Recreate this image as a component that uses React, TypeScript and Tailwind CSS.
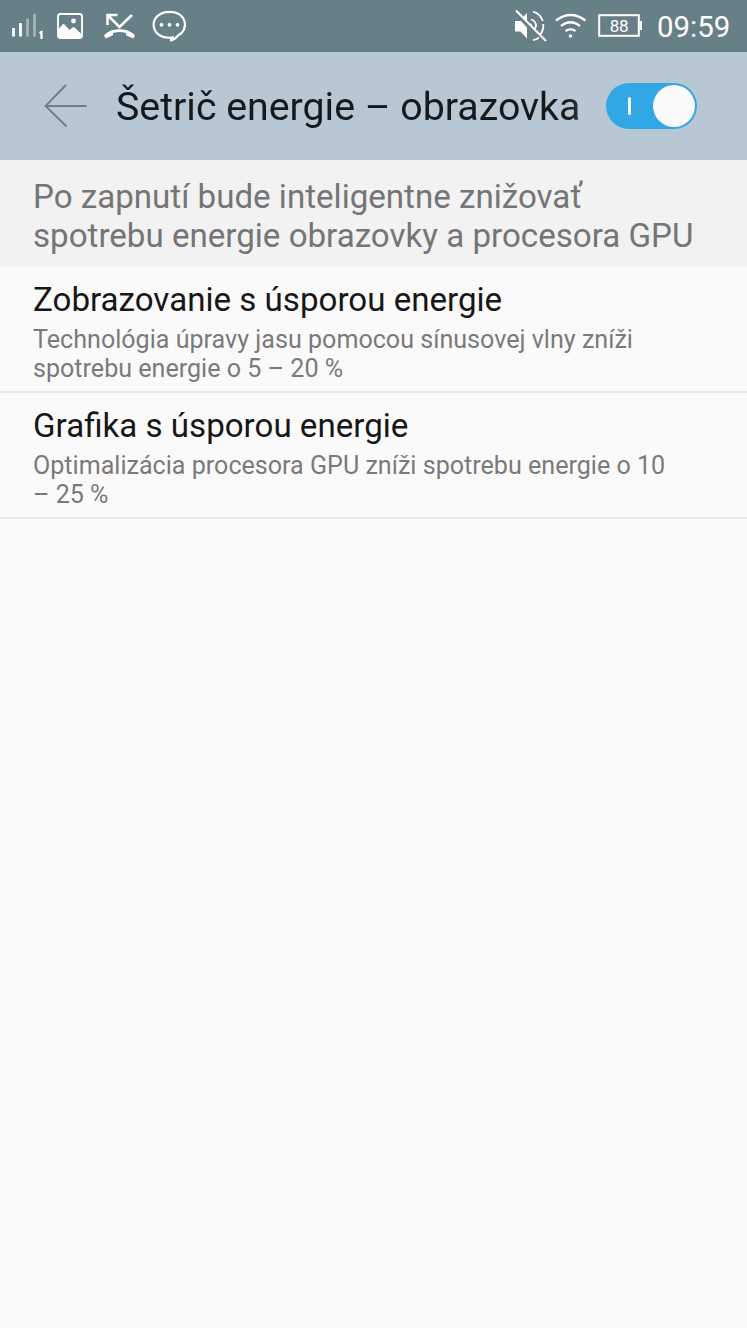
import { useState } from 'react';

interface PowerOption {
  title: string;
  summary: string[];
}

const OPTIONS: PowerOption[] = [
  {
    title: 'Zobrazovanie s úsporou energie',
    summary: ['Technológia úpravy jasu pomocou sínusovej vlny zníži', 'spotrebu energie o 5 – 20 %'],
  },
  {
    title: 'Grafika s úsporou energie',
    summary: ['Optimalizácia procesora GPU zníži spotrebu energie o 10', '– 25 %'],
  },
];

function StatusBar() {
  return (
    <div className="flex h-[52px] items-center justify-between bg-[#678087] text-white">
      {/* Notifications */}
      <svg width="200" height="52" viewBox="0 0 200 52" fill="none" stroke="#fff">
        {/* Signal */}
        <g strokeWidth="2.8">
          <path d="M13.5 28v8.5M20.5 23v13.5" />
          <path d="M27.5 18.5v18M34.5 14v22.5" opacity=".4" />
        </g>
        <path d="M39.5 33l2-1v7" strokeWidth="2.2" />
        {/* Picture */}
        <rect x="58" y="14" width="24" height="24" rx="2.5" strokeWidth="1.8" />
        <path d="M58 30l4.5-5.5q1-.8 2 0l5 5.5 3-2.5q1.2-.6 2 0l7.5 7V38H58z" fill="#fff" stroke="none" />
        <circle cx="73.5" cy="21" r="2.4" fill="#fff" stroke="none" />
        {/* Missed call */}
        <path d="M107.5 25v-10h10M108 15.5l11.5 11.5L132 15" strokeWidth="2.5" />
        <path d="M104 35.500C111 27.300 128 27.300 135 35.500L133.300 38.500 126 35.300V33Q119.500 31 113 33V35.300L105.700 38.500Z" fill="#fff" stroke="none" />
        {/* Message */}
        <path d="M174 37.200C149 42 146.500 12 169.500 11.800C187 11.800 189.500 30 178 35.500Q176 39 171 40.500L171.500 37.800" strokeWidth="2.2" strokeLinejoin="round" />
        <g fill="#fff" stroke="none">
          <circle cx="161.5" cy="24.8" r="1.9" />
          <circle cx="169.5" cy="24.8" r="1.9" />
          <circle cx="177.5" cy="24.8" r="1.9" />
        </g>
      </svg>

      <div className="flex items-center">
        <svg width="136" height="52" viewBox="510 0 136 52" fill="none" stroke="#fff">
          {/* Muted speaker */}
          <path d="M515 21h6l6 6.500V38.500l-6.500-7H515zM522.500 17.500l4.500-4.500v9z" fill="#fff" stroke="none" />
          <path d="M516 10.500L546 41" strokeWidth="2" />
          <path d="M533 11.500Q540.500 14 542.800 21M543.300 24Q543.800 30 540.300 34.500M533 40.200q3.500-.7 6-2.500M531 19.500q5 1.500 5 6.500l-1 2.500M530 24l1.500 1.500" strokeWidth="1.8" />
          {/* Wifi */}
          <path d="M556 20.500Q570.500 9.500 585.500 20.500M561 26Q570.500 18.500 580 26M565.500 31Q570.500 27.500 575.500 31" strokeWidth="2.2" />
          <circle cx="570.5" cy="36" r="1.7" fill="#fff" stroke="none" />
          {/* Battery */}
          <rect x="599.2" y="15.2" width="39.6" height="20.6" strokeWidth="2" />
          <path d="M639.500 21h2.500v9h-2.500z" fill="#fff" stroke="none" />
          <text x="619" y="32" fontSize="17" letterSpacing="-0.3" textAnchor="middle" fill="#fff" stroke="none">88</text>
        </svg>
        <span className="w-[101px] pt-[3px] pl-[11px] text-[29.4px] leading-none whitespace-nowrap">09:59</span>
      </div>
    </div>
  );
}

function Switch({ checked, onChange }: { checked: boolean; onChange: (value: boolean) => void }) {
  return (
    <button
      type="button"
      role="switch"
      aria-checked={checked}
      onClick={() => onChange(!checked)}
      className={`flex h-[46px] w-[91px] shrink-0 items-center rounded-full px-[2px] ${
        checked ? 'justify-between bg-[#31a7e5]' : 'justify-start bg-[#9aa7b0]'
      }`}
    >
      {checked && <span className="ml-[20px] h-[18px] w-[3px] rounded-full bg-[#f4fbff]" />}
      <span className="size-[42px] rounded-full bg-[#fafafa]" />
    </button>
  );
}

export default function App() {
  const [enabled, setEnabled] = useState(true);

  return (
    <div className="flex min-h-screen w-full flex-col overflow-hidden bg-[#fafafa] font-['Roboto','Liberation_Sans',sans-serif]">
      <StatusBar />

      {/* Title bar */}
      <header className="flex h-[108px] items-center bg-[#b7c7d4] pr-[50px] pl-[44px]">
        <button type="button" aria-label="Späť" className="mr-[28px] shrink-0">
          <svg width="44" height="44" viewBox="0 0 44 44" fill="none" stroke="#737b80" strokeWidth="1.8" strokeLinecap="round">
            <path d="M21.5 1.5L1.5 22 22 42M1.5 22H42" />
          </svg>
        </button>
        {/* The end of a long title fades out before the switch */}
        <h1 className="w-[490px] bg-linear-to-r from-[#15191b] from-92% to-[#15191b]/60 bg-clip-text pt-[2px] text-[39.3px] leading-[48px] whitespace-nowrap text-transparent">
          Šetrič energie – obrazovka
        </h1>
        <Switch checked={enabled} onChange={setEnabled} />
      </header>

      <p className="h-[107px] bg-[#f2f2f2] pt-[17px] pl-[33px] text-[33.12px] leading-[39px] whitespace-nowrap text-[#757575]">
        Po zapnutí bude inteligentne znižovať
        <br />
        spotrebu energie obrazovky a procesora GPU
      </p>

      <ul>
        {OPTIONS.map((option) => (
          <li key={option.title} className="h-[126px] border-b-2 border-[#e9e9e9] pt-[13px] pl-[33px] whitespace-nowrap">
            <div className="text-[33.12px] leading-[40px] text-[#171717]">{option.title}</div>
            <div className="pt-[5px] text-[25.1px] leading-[29px] text-[#7a7a7a]">
              {option.summary.map((line) => (
                <div key={line}>{line}</div>
              ))}
            </div>
          </li>
        ))}
      </ul>
    </div>
  );
}
